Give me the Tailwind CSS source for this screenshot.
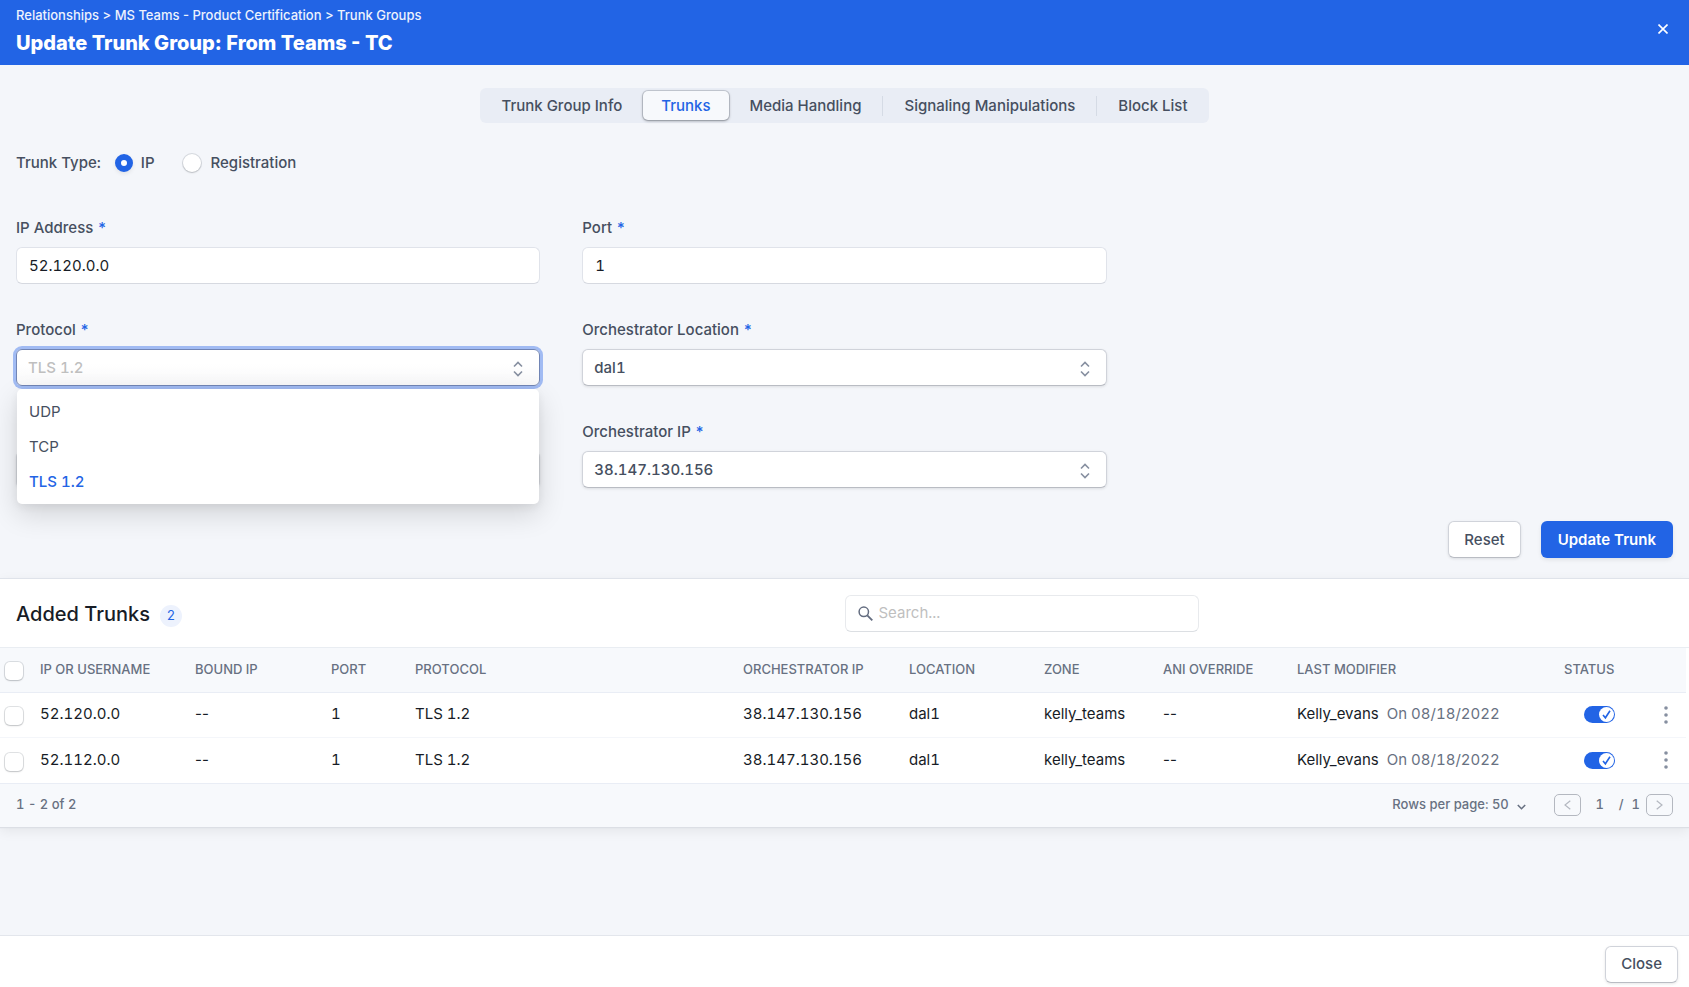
<!DOCTYPE html>
<html lang="en">
<head>
    <meta charset="UTF-8">
    <meta name="viewport" content="width=device-width, initial-scale=1.0">
    <title>Update Trunk Group</title>
    <script src="https://cdn.jsdelivr.net/npm/@tailwindcss/browser@4"></script>
</head>
<body class="flex min-h-screen flex-col bg-[#f4f6fa] font-['Inter',sans-serif] text-[15px] text-[#464f60] tabular-nums">
    <header class="flex h-[65px] items-start justify-between bg-[#2264e5] px-4 pt-[5px] text-white normal-nums">
        <div>
            <nav aria-label="Breadcrumb" class="text-[13px] leading-5 font-medium text-[#edf2fd]">
                <a href="#">Relationships</a> &gt; <a href="#">MS Teams - Product Certification</a> &gt; <a href="#">Trunk Groups</a>
            </nav>
            <h1 class="pt-[2px] text-[20px] leading-8 font-extrabold">Update Trunk Group: From Teams - TC</h1>
        </div>
        <button type="button" aria-label="Close panel" class="mt-[14px] flex h-5 w-5 items-center justify-center">
            <svg class="h-[10px] w-[10px]" viewBox="0 0 10 10" fill="none" stroke="currentColor" stroke-width="1.6"><path d="M0.5 0.5l9 9M9.5 0.5l-9 9"/></svg>
        </button>
    </header>

    <main class="flex-1">
        <!-- Tabs -->
        <div class="flex justify-center pt-[23px]">
            <div role="tablist" class="flex h-[35px] items-center rounded-md bg-[#e9edf5] font-medium">
                <button type="button" role="tab" class="h-5 px-[21px] leading-5">Trunk Group Info</button>
                <button type="button" role="tab" aria-selected="true" class="h-[29px] rounded-[5px] bg-[#f7f9fc] px-[18px] pt-px text-[#2264e5] shadow-[0_0_0_1px_rgba(70,79,96,0.2),0_1px_3px_rgba(0,0,0,0.35)]">Trunks</button>
                <button type="button" role="tab" class="h-5 border-r border-[#d5dbe5] px-[21px] leading-5">Media Handling</button>
                <button type="button" role="tab" class="h-5 border-r border-[#d5dbe5] px-[21px] leading-5">Signaling Manipulations</button>
                <button type="button" role="tab" class="h-5 px-[21px] leading-5">Block List</button>
            </div>
        </div>

        <form class="px-4">
            <fieldset class="flex items-center pt-7 leading-6 font-medium">
                <legend class="float-left mr-[14px]">Trunk Type:</legend>
                <label class="mr-7 flex items-center gap-2">
                    <input type="radio" name="type" checked class="h-[18px] w-[18px] appearance-none rounded-full bg-white shadow-[0_0_0_1px_rgba(70,79,96,0.16),0_1px_2px_rgba(0,0,0,0.15)] checked:border-[6px] checked:border-[#2264e5] checked:shadow-[0_2px_4px_rgba(0,0,0,0.08)]">
                    IP
                </label>
                <label class="flex items-center gap-[10px]">
                    <input type="radio" name="type" class="h-[18px] w-[18px] appearance-none rounded-full bg-white shadow-[0_0_0_1px_rgba(70,79,96,0.16),0_1px_2px_rgba(0,0,0,0.15)]">
                    Registration
                </label>
            </fieldset>

            <div class="grid grid-cols-3 gap-x-[42px] gap-y-[34px] pt-[41px]">
                <div>
                    <label for="ip" class="mb-[7px] block leading-6 font-medium">IP Address <span class="text-[#2264e5]">*</span></label>
                    <input id="ip" type="text" value="52.120.0.0" class="block h-[37px] w-full rounded-md border border-[#e0e3ea] border-b-[#d6d9e0] bg-white px-3 text-[#171c26]">
                </div>
                <div>
                    <label for="port" class="mb-[7px] block leading-6 font-medium">Port <span class="text-[#2264e5]">*</span></label>
                    <input id="port" type="text" value="1" class="block h-[37px] w-full rounded-md border border-[#e0e3ea] border-b-[#d6d9e0] bg-white px-3 text-[#171c26]">
                </div>

                <div class="relative col-start-1">
                    <label for="protocol" class="mb-[7px] block leading-6 font-medium">Protocol <span class="text-[#2264e5]">*</span></label>
                    <div class="relative">
                        <select id="protocol" class="block h-[37px] w-full appearance-none rounded-md border border-[#7185b5] bg-linear-to-b from-white from-40% to-[#f8f8f9] px-[11px] pt-px font-medium text-[#bfbfbf] shadow-[0_0_0_3px_#a1bbf3]"><option>TLS 1.2</option></select>
                        <svg class="pointer-events-none absolute top-3 right-[17px] h-4 w-[10px]" viewBox="0 0 10 16" fill="none" stroke="#868fa0" stroke-width="1.6"><path d="M1 5.5l4-4 4 4M1 10.5l4 4 4-4"/></svg>
                    </div>
                    <!-- Open protocol menu -->
                    <ul role="listbox" aria-label="Protocol" class="absolute inset-x-px top-full z-10 mt-[3px] rounded-[5px] bg-white py-[5px] shadow-[0_10px_28px_rgba(0,0,0,0.14),0_3px_8px_rgba(0,0,0,0.06)]">
                        <li role="option" class="h-[35px] px-3 leading-[35px]">UDP</li>
                        <li role="option" class="h-[35px] px-3 leading-[35px]">TCP</li>
                        <li role="option" aria-selected="true" class="h-[35px] px-3 leading-[35px] font-medium text-[#2264e5]">TLS 1.2</li>
                    </ul>
                </div>
                <div>
                    <label for="location" class="mb-[7px] block leading-6 font-medium">Orchestrator Location <span class="text-[#2264e5]">*</span></label>
                    <div class="relative">
                        <select id="location" class="block h-[37px] w-full appearance-none rounded-md border border-[#d0d3da] border-b-[#b9bcc3] bg-white px-[11px] pt-px font-medium shadow-[0_1px_3px_rgba(0,0,0,0.1)]"><option>dal1</option></select>
                        <svg class="pointer-events-none absolute top-3 right-[17px] h-4 w-[10px]" viewBox="0 0 10 16" fill="none" stroke="#868fa0" stroke-width="1.6"><path d="M1 5.5l4-4 4 4M1 10.5l4 4 4-4"/></svg>
                    </div>
                </div>

                <div class="col-start-1 flex items-end">
                    <select aria-label="Zone" class="block h-[37px] w-full appearance-none rounded-md border border-[#d0d3da] border-b-[#b9bcc3] bg-white px-[11px] shadow-[0_1px_3px_rgba(0,0,0,0.1)]"></select>
                </div>
                <div>
                    <label for="orch-ip" class="mb-[7px] block leading-6 font-medium">Orchestrator IP <span class="text-[#2264e5]">*</span></label>
                    <div class="relative">
                        <select id="orch-ip" class="block h-[37px] w-full appearance-none rounded-md border border-[#d0d3da] border-b-[#b9bcc3] bg-white px-[11px] pt-px font-medium shadow-[0_1px_3px_rgba(0,0,0,0.1)]"><option>38.147.130.156</option></select>
                        <svg class="pointer-events-none absolute top-3 right-[17px] h-4 w-[10px]" viewBox="0 0 10 16" fill="none" stroke="#868fa0" stroke-width="1.6"><path d="M1 5.5l4-4 4 4M1 10.5l4 4 4-4"/></svg>
                    </div>
                </div>
            </div>

            <div class="flex justify-end gap-5 pt-[33px] pb-5">
                <button type="button" class="h-[37px] rounded-md border border-[#d0d3da] border-b-[#b9bcc3] bg-white px-[15px] pt-px font-medium shadow-[0_1px_3px_rgba(0,0,0,0.1)]">Reset</button>
                <button type="button" class="h-[37px] rounded-md bg-[#2264e5] px-[17px] pt-px font-semibold text-white shadow-[0_2px_4px_rgba(0,0,0,0.08)]">Update Trunk</button>
            </div>
        </form>

        <section class="border-t border-[#dfe3ea] bg-white shadow-[0_1px_1px_#dcdfe5,0_4px_12px_rgba(0,0,0,0.07)]">
            <div class="grid grid-cols-2 items-center border-b border-[#e9edf2] pt-4 pb-[15px]">
                <div class="flex items-center gap-[10px] pl-4">
                    <h2 class="text-[20px] leading-8 font-medium text-[#171c26]">Added Trunks</h2>
                    <span class="mt-1 flex h-[22px] w-[22px] items-center justify-center rounded-full bg-[#edf2fd] text-[13px] text-[#2264e5]">2</span>
                </div>
                <label class="flex h-[37px] w-[354px] items-center gap-[6px] rounded-md border border-[#e8eaed] border-b-[#dcdfe3] bg-white pl-3">
                    <svg class="h-[15px] w-[15px] shrink-0" viewBox="0 0 15 15" fill="none" stroke="#646d80" stroke-width="1.5"><circle cx="5.8" cy="5.8" r="4.7"/><path d="M9.3 9.3l5 5" stroke-width="1.9"/></svg>
                    <input type="search" aria-label="Search trunks" placeholder="Search..." class="min-w-0 flex-1 placeholder:text-[#bfbfbf]">
                </label>
            </div>

            <div class="pr-[3px]">
                <table class="w-full table-fixed text-left whitespace-nowrap">
                    <colgroup>
                        <col class="w-[40px]"><col class="w-[155px]"><col class="w-[136px]"><col class="w-[84px]"><col><col class="w-[166px]"><col class="w-[135px]"><col class="w-[119px]"><col class="w-[134px]"><col class="w-[267px]"><col class="w-[82px]"><col class="w-[40px]">
                    </colgroup>
                    <thead class="bg-[#f7f9fc] text-[13px] text-[#687182] uppercase">
                        <tr class="h-[44px] border-b border-[#e9edf5]">
                            <th class="pl-[5px]"><input type="checkbox" aria-label="Select all" class="mt-[3px] block h-[18px] w-[18px] appearance-none rounded-[5px] bg-white shadow-[0_0_0_1px_rgba(70,79,96,0.16),0_1px_2px_rgba(0,0,0,0.15)]"></th>
                            <th class="font-medium">IP or Username</th>
                            <th class="font-medium">Bound IP</th>
                            <th class="font-medium">Port</th>
                            <th class="font-medium">Protocol</th>
                            <th class="font-medium">Orchestrator IP</th>
                            <th class="font-medium">Location</th>
                            <th class="font-medium">Zone</th>
                            <th class="font-medium">ANI Override</th>
                            <th class="font-medium">Last Modifier</th>
                            <th class="font-medium">Status</th>
                            <th></th>
                        </tr>
                    </thead>
                    <tbody class="text-[#171c26]">
                        <tr class="h-[45px] border-b border-[#f4f6fa]">
                            <td class="pl-[5px]"><input type="checkbox" aria-label="Select 52.120.0.0" class="mt-[3px] block h-[18px] w-[18px] appearance-none rounded-[5px] bg-white shadow-[0_0_0_1px_rgba(70,79,96,0.16),0_1px_2px_rgba(0,0,0,0.15)]"></td>
                            <td>52.120.0.0</td>
                            <td class="normal-nums">--</td>
                            <td>1</td>
                            <td>TLS 1.2</td>
                            <td>38.147.130.156</td>
                            <td>dal1</td>
                            <td>kelly_teams</td>
                            <td class="normal-nums">--</td>
                            <td>Kelly_evans <span class="ml-1 text-[#687182]">On 08/18/2022</span></td>
                            <td>
                                <button type="button" role="switch" aria-checked="true" aria-label="Status" class="ml-5 flex h-[17px] w-[31px] items-center justify-end rounded-full bg-[#2264e5] pr-[1px]">
                                    <svg class="h-[15px] w-[15px]" viewBox="0 0 15 15"><circle cx="7.5" cy="7.5" r="7.5" fill="#fff"/><path d="M4 8l2.4 2.8L11 3.8" fill="none" stroke="#2264e5" stroke-width="1.6"/></svg>
                                </button>
                            </td>
                            <td>
                                <button type="button" aria-label="Row actions" class="flex h-5 w-10 items-center justify-center">
                                    <svg class="h-[18px] w-1" viewBox="0 0 4 18" fill="#868fa0"><circle cx="2" cy="2" r="1.8"/><circle cx="2" cy="9" r="1.8"/><circle cx="2" cy="16" r="1.8"/></svg>
                                </button>
                            </td>
                        </tr>
                        <tr class="h-[46px]">
                            <td class="pl-[5px]"><input type="checkbox" aria-label="Select 52.112.0.0" class="mt-[3px] block h-[18px] w-[18px] appearance-none rounded-[5px] bg-white shadow-[0_0_0_1px_rgba(70,79,96,0.16),0_1px_2px_rgba(0,0,0,0.15)]"></td>
                            <td>52.112.0.0</td>
                            <td class="normal-nums">--</td>
                            <td>1</td>
                            <td>TLS 1.2</td>
                            <td>38.147.130.156</td>
                            <td>dal1</td>
                            <td>kelly_teams</td>
                            <td class="normal-nums">--</td>
                            <td>Kelly_evans <span class="ml-1 text-[#687182]">On 08/18/2022</span></td>
                            <td>
                                <button type="button" role="switch" aria-checked="true" aria-label="Status" class="ml-5 flex h-[17px] w-[31px] items-center justify-end rounded-full bg-[#2264e5] pr-[1px]">
                                    <svg class="h-[15px] w-[15px]" viewBox="0 0 15 15"><circle cx="7.5" cy="7.5" r="7.5" fill="#fff"/><path d="M4 8l2.4 2.8L11 3.8" fill="none" stroke="#2264e5" stroke-width="1.6"/></svg>
                                </button>
                            </td>
                            <td>
                                <button type="button" aria-label="Row actions" class="flex h-5 w-10 items-center justify-center">
                                    <svg class="h-[18px] w-1" viewBox="0 0 4 18" fill="#868fa0"><circle cx="2" cy="2" r="1.8"/><circle cx="2" cy="9" r="1.8"/><circle cx="2" cy="16" r="1.8"/></svg>
                                </button>
                            </td>
                        </tr>
                    </tbody>
                </table>
            </div>

            <!-- Pagination -->
            <div class="flex h-[44px] items-center justify-between border-t border-[#e9edf5] bg-[#f7f9fc] px-4 pb-[2px] text-[13px] font-medium text-[#687182]">
                <span>1 - 2 of 2</span>
                <div class="flex items-center">
                    <button type="button" class="mr-7 flex items-center gap-2">Rows per page: 50
                        <svg class="mt-1 h-[6px] w-[9px]" viewBox="0 0 9 6" fill="none" stroke="currentColor" stroke-width="1.6"><path d="M0.8 1l3.7 3.7L8.2 1"/></svg>
                    </button>
                    <button type="button" aria-label="Previous page" class="flex h-[22px] w-[27px] items-center justify-center rounded-[5px] border border-[#b4b8c0]">
                        <svg class="h-[10px] w-[7px]" viewBox="0 0 7 10" fill="none" stroke="#b4b8c0" stroke-width="1.2"><path d="M6.3 0.7L1 5l5.3 4.3"/></svg>
                    </button>
                    <span class="w-[38px] text-center">1</span>
                    <span class="mr-[6px] flex gap-2"><span>/</span><span>1</span></span>
                    <button type="button" aria-label="Next page" class="flex h-[22px] w-[27px] items-center justify-center rounded-[5px] border border-[#b4b8c0]">
                        <svg class="h-[10px] w-[7px]" viewBox="0 0 7 10" fill="none" stroke="#b4b8c0" stroke-width="1.2"><path d="M0.7 0.7L6 5 0.7 9.3"/></svg>
                    </button>
                </div>
            </div>
        </section>
    </main>

    <footer class="flex h-[52px] items-center justify-end border-t border-[#e3e6ec] bg-white px-[11px] pt-[6px]">
        <button type="button" class="h-[37px] rounded-md border border-[#d0d3da] border-b-[#b9bcc3] bg-white px-[15px] font-medium shadow-[0_1px_3px_rgba(0,0,0,0.1)]">Close</button>
    </footer>
</body>
</html>
